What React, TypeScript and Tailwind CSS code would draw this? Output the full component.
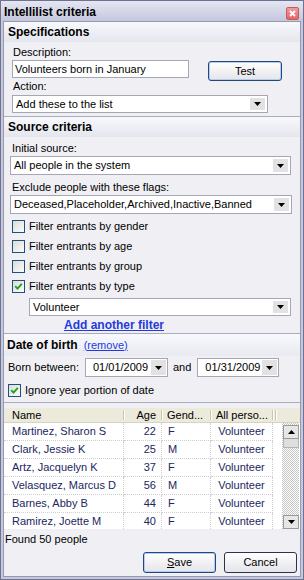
import React from "react";

function Arrow({ up }: { up?: boolean }) {
  return (
    <svg width="7" height="4" viewBox="0 0 7 4">
      <path d={up ? "M0 4 L3.5 0 L7 4 Z" : "M0 0 L7 0 L3.5 4 Z"} fill="#000" />
    </svg>
  );
}

function Select({ value, className }: { value: string; className: string }) {
  return (
    <div className={`flex items-center bg-white border border-[#a5a8b4] ${className}`}>
      <span className="flex-1 pl-[3px] whitespace-nowrap overflow-hidden">{value}</span>
      <span className="w-[15px] self-stretch m-[2px] bg-[#e2e2e2] flex items-center justify-center">
        <Arrow />
      </span>
    </div>
  );
}

function DateBox({ value, className }: { value: string; className: string }) {
  return (
    <div className={`flex items-center bg-white border border-[#a5a8b4] h-[19px] ${className}`}>
      <span className="flex-1 pl-[7px] whitespace-nowrap">{value}</span>
      <span className="w-[15px] self-stretch m-[1px] bg-[#e2e2e2] flex items-center justify-center">
        <Arrow />
      </span>
    </div>
  );
}

function Check({ checked }: { checked?: boolean }) {
  return (
    <span className="w-[13px] h-[13px] shrink-0 border border-[#1c5180] bg-gradient-to-br from-[#dcdcd6] to-[#fbfbfb] flex items-center justify-center">
      {checked && (
        <svg width="9" height="9" viewBox="0 0 9 9">
          <path d="M1.2 4.2 L3.5 6.6 L7.8 1.8" stroke="#21a121" strokeWidth="1.9" fill="none" />
        </svg>
      )}
    </span>
  );
}

function SectionHeader({ children, h }: { children: React.ReactNode; h: string }) {
  return (
    <div className={`${h} flex items-center pl-[4px] bg-gradient-to-b from-[#f8f9fc] to-[#e4e6ee]`}>
      {children}
    </div>
  );
}

const rows = [
  ["Martinez, Sharon S", "22", "F"],
  ["Clark, Jessie K", "25", "M"],
  ["Artz, Jacquelyn K", "37", "F"],
  ["Velasquez, Marcus D", "56", "M"],
  ["Barnes, Abby B", "44", "F"],
  ["Ramirez, Joette M", "40", "F"],
];

function HSep() {
  return <span className="w-[2px] h-[10px] shrink-0 border-l border-l-[#c9c6b4] border-r border-r-white" />;
}

export default function App() {
  return (
    <div className="w-[304px] h-[580px] flex flex-col bg-[#c6c9de] border border-[#6e7290] font-['Liberation_Sans',Arial,sans-serif] text-[11px] leading-[13px] text-black">
      {/* Title bar */}
      <div className="h-[20px] shrink-0 flex items-center justify-between pl-[3px] pr-[4px] bg-gradient-to-b from-[#e4e6f2] to-[#c5c8dd]">
        <span className="font-bold text-[12px] leading-[14px] mt-[1px]">Intellilist criteria</span>
        <span className="w-[13px] h-[13px] mt-[4px] rounded-[2px] border border-[#c85a5a] bg-gradient-to-b from-[#f39a9a] to-[#e06666] flex items-center justify-center">
          <svg width="7" height="7" viewBox="0 0 7 7">
            <path d="M1 1 L6 6 M6 1 L1 6" stroke="#fff" strokeWidth="1.8" />
          </svg>
        </span>
      </div>

      {/* Panel */}
      <div className="flex-1 mx-[2px] mb-[2px] border border-[#9699ad] bg-[#f0f0f4] flex flex-col">
        {/* Specifications */}
        <SectionHeader h="h-[20px]">
          <span className="font-bold text-[12px] leading-[14px]">Specifications</span>
        </SectionHeader>
        <div className="pl-[8px] pt-[4px] pb-[3px] flex flex-col">
          <span className="ml-[1px]">Description:</span>
          <div className="h-[18px] mt-[1px] flex">
            <div className="w-[177px] h-[18px] bg-white border border-[#a5a8b4] pl-[2px] flex items-center whitespace-nowrap">
              Volunteers born in January
            </div>
            <button className="ml-[19px] mt-[1px] w-[74px] h-[20px] rounded-[3px] border border-[#23467c] shadow-[inset_0_0_0_1px_#b4cdef] bg-gradient-to-b from-white to-[#e4e4ea] text-[11px] leading-[13px]">
              Test
            </button>
          </div>
          <span className="ml-[1px] mt-[2px]">Action:</span>
          <Select value="Add these to the list" className="mt-[2px] w-[256px] h-[18px]" />
        </div>

        {/* Source criteria */}
        <div className="border-t border-[#a9acbe]">
          <SectionHeader h="h-[20px]">
            <span className="font-bold text-[12px] leading-[14px]">Source criteria</span>
          </SectionHeader>
          <div className="pl-[6px] pt-[5px] pb-[1px] flex flex-col">
            <span className="ml-[2px]">Initial source:</span>
            <Select value="All people in the system" className="mt-[1px] w-[281px] h-[19px]" />
            <span className="ml-[2px] mt-[6px]">Exclude people with these flags:</span>
            <Select value="Deceased,Placeholder,Archived,Inactive,Banned" className="mt-[1px] w-[282px] h-[19px]" />
            <div className="mt-[2px] flex flex-col">
              {[
                ["Filter entrants by gender", false],
                ["Filter entrants by age", false],
                ["Filter entrants by group", false],
                ["Filter entrants by type", true],
              ].map(([label, c]) => (
                <div key={label as string} className="h-[20px] flex items-center pl-[2px] gap-[4px]">
                  <Check checked={c as boolean} />
                  <span>{label as string}</span>
                </div>
              ))}
            </div>
            <Select value="Volunteer" className="mt-[2px] ml-[19px] w-[262px] h-[18px]" />
            <a className="mt-[2px] ml-[54px] font-bold text-[12px] leading-[14px] text-[#1f3bdf] underline">
              Add another filter
            </a>
          </div>
        </div>

        {/* Date of birth */}
        <div className="border-t border-[#a9acbe]">
          <div className="h-[22px] flex items-center pl-[3px] bg-gradient-to-b from-[#f8f9fc] to-[#e8eaf1]">
            <span className="font-bold text-[12px] leading-[14px]">Date of birth</span>
            <a className="ml-[6px] text-[#1f3bdf] underline">(remove)</a>
          </div>
          <div className="pl-[4px] pb-[2px] flex flex-col">
            <div className="mt-[2px] flex items-center">
              <span className="w-[77px]">Born between:</span>
              <DateBox value="01/01/2009" className="w-[83px]" />
              <span className="ml-[5px]">and</span>
              <DateBox value="01/31/2009" className="ml-[6px] w-[82px]" />
            </div>
            <div className="mt-[3px] h-[20px] flex items-center gap-[4px]">
              <Check checked />
              <span>Ignore year portion of date</span>
            </div>
          </div>
        </div>

        {/* Results */}
        <div className="border-t border-[#a9acbe] pt-[5px] flex flex-col">
          <div className="h-[15px] flex items-center bg-[#ebeadb] border-b border-[#d6d3c2]">
            <span className="w-[119px] pl-[8px]">Name</span>
            <HSep />
            <span className="w-[36px] text-right pr-[5px]">Age</span>
            <HSep />
            <span className="w-[47px] pl-[4px]">Gend...</span>
            <HSep />
            <span className="w-[60px] text-center">All perso...</span>
            <HSep />
            <span className="w-[1px]" />
            <HSep />
          </div>
          <div className="h-[106px] flex bg-white overflow-hidden">
            <div className="flex flex-col text-[#1b2760]">
              {rows.map(([n, a, g]) => (
                <div key={n} className="h-[18px] shrink-0 flex">
                  <span className="w-[120px] pl-[8px] flex items-center border-r border-b border-dotted border-[#cfcfcf] whitespace-nowrap">{n}</span>
                  <span className="w-[38px] pr-[5px] flex items-center justify-end border-r border-b border-dotted border-[#cfcfcf]">{a}</span>
                  <span className="w-[49px] pl-[6px] flex items-center border-r border-b border-dotted border-[#cfcfcf]">{g}</span>
                  <span className="w-[62px] flex items-center justify-center border-r border-b border-dotted border-[#cfcfcf]">Volunteer</span>
                </div>
              ))}
            </div>
            <div className="w-[9px]" />
            <div className="w-[17px] flex flex-col pt-[2px] pl-[1px] bg-[repeating-conic-gradient(#c4c4c4_0_25%,#ffffff_0_50%)] bg-[length:2px_2px]">
              <div className="h-[14px] bg-[#e6e6e6] border border-[#9a9a9a] flex items-center justify-center">
                <Arrow up />
              </div>
              <div className="h-[9px] bg-[#dedede] border border-t-0 border-[#b4b4b4]" />
              <div className="flex-1" />
              <div className="h-[14px] bg-[#e6e6e6] border border-[#9a9a9a] flex items-center justify-center">
                <Arrow />
              </div>
            </div>
          </div>
          <span className="mt-[4px] pl-[1px]">Found 50 people</span>
          <div className="mt-[6px] flex justify-end gap-[8px] pr-[3px]">
            <button className="w-[73px] h-[21px] rounded-[3px] border border-[#23467c] shadow-[inset_0_0_0_1px_#b4cdef] bg-gradient-to-b from-white to-[#e4e4ea] text-[11px] leading-[13px]">
              <span className="underline">S</span>ave
            </button>
            <button className="w-[73px] h-[21px] rounded-[3px] border border-[#2a3450] bg-gradient-to-b from-white to-[#e4e4ea] text-[11px] leading-[13px]">
              Cancel
            </button>
          </div>
        </div>
      </div>
    </div>
  );
}
